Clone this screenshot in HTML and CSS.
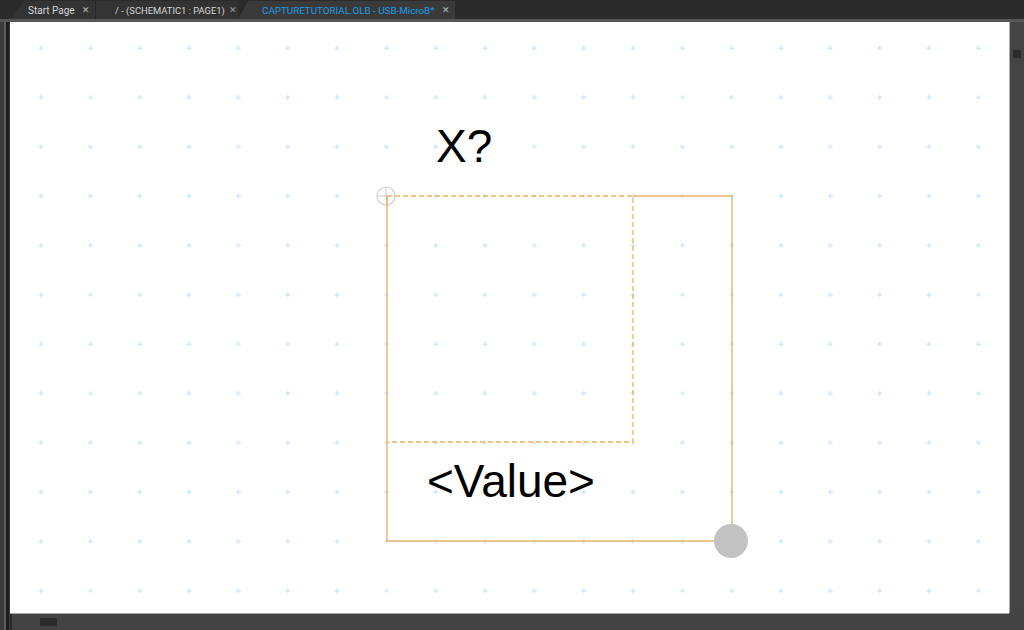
FILE: index.html
```html
<!DOCTYPE html>
<html lang="en">
<head>
    <meta charset="UTF-8">
    <title>CAPTURETUTORIAL.OLB - USB-MicroB*</title>
    <link rel="stylesheet" href="styles.css">
</head>
<body>
    <div class="tabbar">
        <div class="tab tab-first">
            <span class="tab-title">Start Page</span>
            <span class="tab-close">&#x2715;</span>
        </div>
        <div class="tab tab-second">
            <span class="tab-title">/ - (SCHEMATIC1 : PAGE1)</span>
            <span class="tab-close">&#x2715;</span>
        </div>
        <div class="tab tab-active">
            <span class="tab-title">CAPTURETUTORIAL.OLB - USB-MicroB*</span>
            <span class="tab-close">&#x2715;</span>
        </div>
    </div>
    <div class="tabline"></div>

    <div class="workspace">
        <div class="gutter"></div>
        <div class="center">
            <div class="canvas">
                <svg width="999" height="591" viewBox="0 0 999 591">
                    <defs>
                        <pattern id="grid" patternUnits="userSpaceOnUse" x="6.335" y="1.335" width="49.33" height="49.33">
                            <path d="M22.2 24.7h5M24.7 22.2v5" stroke="#c9e5f8" stroke-width="1.3" fill="none"/>
                        </pattern>
                    </defs>
                    <rect width="999" height="591" fill="url(#grid)"/>

                    <!-- part body -->
                    <path d="M623 174H722V519H377V174" fill="none" stroke="#e6b46c" stroke-width="1.4"/>
                    <path d="M377 174H623V420H377" fill="none" stroke="#eeb25a" stroke-width="1.3" stroke-dasharray="5 3"/>

                    <text x="426" y="140" class="part-text">X?</text>
                    <text x="417" y="475" class="part-text">&lt;Value&gt;</text>

                    <!-- origin marker -->
                    <circle cx="376" cy="174" r="9" fill="none" stroke="#cccccc" stroke-width="1.2"/>
                    <path d="M367 174h9M376 165v9" stroke="#cccccc" stroke-width="1"/>
                    <path d="M377 174V184" stroke="#e6b46c" stroke-width="1.4"/>

                    <!-- resize handle -->
                    <circle cx="721" cy="519" r="17" fill="#c2c2c2"/>
                </svg>
            </div>
            <div class="hscroll">
                <div class="hthumb"></div>
            </div>
        </div>
        <div class="vscroll">
            <div class="vthumb"></div>
        </div>
    </div>
</body>
</html>
```

FILE: styles.css
```css
/* Capture editor window */
body {
    margin: 0;
    width: 1024px;
    height: 630px;
    overflow: hidden;
    background-color: #434343;
    font-family: Roboto, "Noto Sans", Arial, sans-serif;
}
.tabbar {
    height: 19px;
    background-color: #2b2b2b;
    display: flex;
    align-items: flex-end;
}
.tab {
    height: 18px;
    display: flex;
    align-items: center;
    background-color: #333333;
    color: #d6d6d6;
    font-size: 10px;
    box-sizing: border-box;
}
.tab-first {
    margin-left: 10px;
    width: 85px;
    padding-left: 18px;
    clip-path: polygon(14px 0, 100% 0, 100% 100%, 0 100%);
}
.tab-second {
    width: 143px;
    padding-left: 19px;
    border-left: 1px solid #262626;
    font-size: 9.4px;
}
.tab-active {
    width: 217px;
    padding-left: 24px;
    background-color: #3a3a3a;
    color: #1e9be0;
    font-size: 9.8px;
    clip-path: polygon(10px 0, 100% 0, 100% 100%, 0 100%);
}
.tab-title { white-space: nowrap; }
.tab-close {
    margin-left: auto;
    margin-right: 5px;
    font-size: 9px;
    color: #bdbdbd;
}
.tab-second .tab-close { margin-right: 1px; color: #9a9a9a; }
.tabline {
    height: 3px;
    background-color: #575757;
}
.workspace {
    display: flex;
    height: 608px;
}
.gutter {
    width: 10px;
    background: linear-gradient(to right, #3b3b3b 0 4px, #5e5e5e 4px 6px, #1d1d1d 6px 9px, #3b3b3b 9px);
}
.center {
    width: 999px;
    display: flex;
    flex-direction: column;
}
.canvas {
    height: 591px;
    background-color: #ffffff;
    border-bottom: 1px solid #a8a8a8;
}
.canvas svg { display: block; }
.part-text {
    font-family: "Liberation Sans", Arial, sans-serif;
    font-size: 46px;
    fill: #000000;
}
.hscroll {
    flex: 1;
    background-color: #434343;
    padding: 4px 0 0 30px;
    box-shadow: inset 50px -2px 0 -48px #2a2a2a;
}
.hthumb {
    width: 17px;
    height: 8px;
    background-color: #2c2c2c;
}
.vscroll {
    width: 14px;
    border-left: 1px solid #a8a8a8;
    height: 591px;
    background-color: #444444;
    padding: 28px 0 0 3px;
    box-sizing: border-box;
}
.vthumb {
    width: 8px;
    height: 8px;
    background-color: #2c2c2c;
}
```
